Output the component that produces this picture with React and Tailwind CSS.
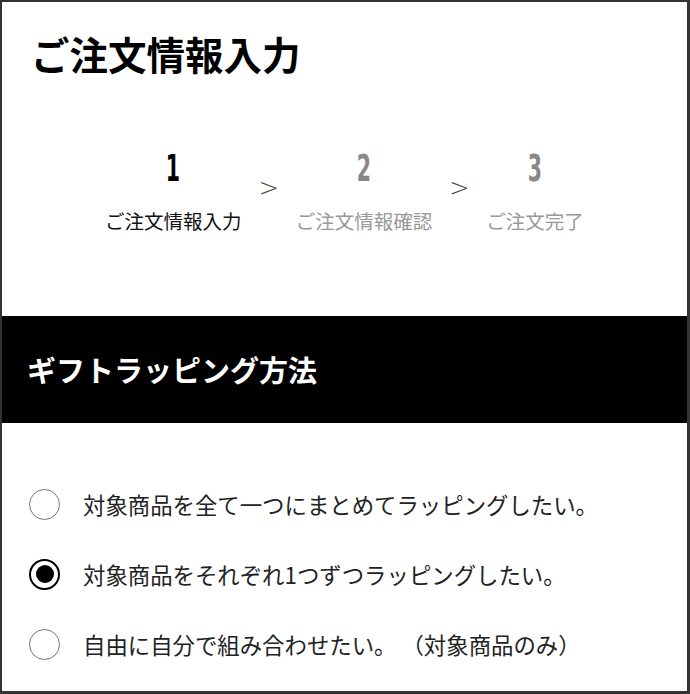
import React, { useState } from 'react';

const steps = [
  { num: '1', label: 'ご注文情報入力', active: true },
  { num: '2', label: 'ご注文情報確認', active: false },
  { num: '3', label: 'ご注文完了', active: false },
];

const options = [
  '対象商品を全て一つにまとめてラッピングしたい。',
  '対象商品をそれぞれ1つずつラッピングしたい。',
  '自由に自分で組み合わせたい。 （対象商品のみ）',
];

const jp = { fontFamily: '"Noto Sans CJK JP", "Noto Sans", sans-serif' };

function Radio({ checked }) {
  return checked ? (
    <span className="flex h-[31px] w-[31px] shrink-0 items-center justify-center rounded-full border-2 border-black">
      <span className="h-[18px] w-[18px] rounded-full bg-black" />
    </span>
  ) : (
    <span className="h-[31px] w-[31px] shrink-0 rounded-full border-[1.5px] border-[#777]" />
  );
}

export default function App() {
  const [selected, setSelected] = useState(1);

  return (
    <div
      className="h-[694px] w-[690px] overflow-hidden border-b-[3px] border-l-2 border-r-[3px] border-t-2 border-[#333] bg-white"
      style={jp}
    >
      {/* Page title */}
      <h1 className="pl-[29px] pt-[31px] text-[38.5px] font-bold leading-[40px] text-black">
        ご注文情報入力
      </h1>

      {/* Progress steps */}
      <div className="mt-[79px] flex items-start justify-center">
        {steps.map((step, i) => (
          <React.Fragment key={step.num}>
            {i > 0 && (
              <span
                className="mx-[17px] mt-[21px] text-[24px] font-light leading-[30px] text-[#444]"
                style={{ fontFamily: '"DejaVu Sans", sans-serif' }}
              >
                &gt;
              </span>
            )}
            <div className="flex flex-col items-center">
              <span
                className={`inline-block scale-x-[0.6] text-[38px] font-bold leading-[32px] ${step.active ? 'text-black' : 'text-[#888]'}`}
                style={{ fontFamily: '"DejaVu Sans Condensed", "DejaVu Sans", sans-serif' }}
              >
                {step.num}
              </span>
              <span
                className={`mt-[24px] text-[19.5px] leading-[26px] ${step.active ? 'text-[#111]' : 'text-[#999]'}`}
              >
                {step.label}
              </span>
            </div>
          </React.Fragment>
        ))}
      </div>

      {/* Section header */}
      <div className="mt-[82px] flex h-[107px] items-center bg-black pl-[25px]">
        <h2 className="text-[29px] font-bold leading-none text-white">ギフトラッピング方法</h2>
      </div>

      {/* Wrapping options */}
      <div className="pt-[46px]">
        {options.map((label, i) => (
          <label
            key={label}
            onClick={() => setSelected(i)}
            className="flex h-[70px] cursor-pointer items-center gap-[23px] pl-[27px]"
          >
            <Radio checked={selected === i} />
            <span className="text-[22.4px] leading-none text-[#222]">{label}</span>
          </label>
        ))}
      </div>
    </div>
  );
}
